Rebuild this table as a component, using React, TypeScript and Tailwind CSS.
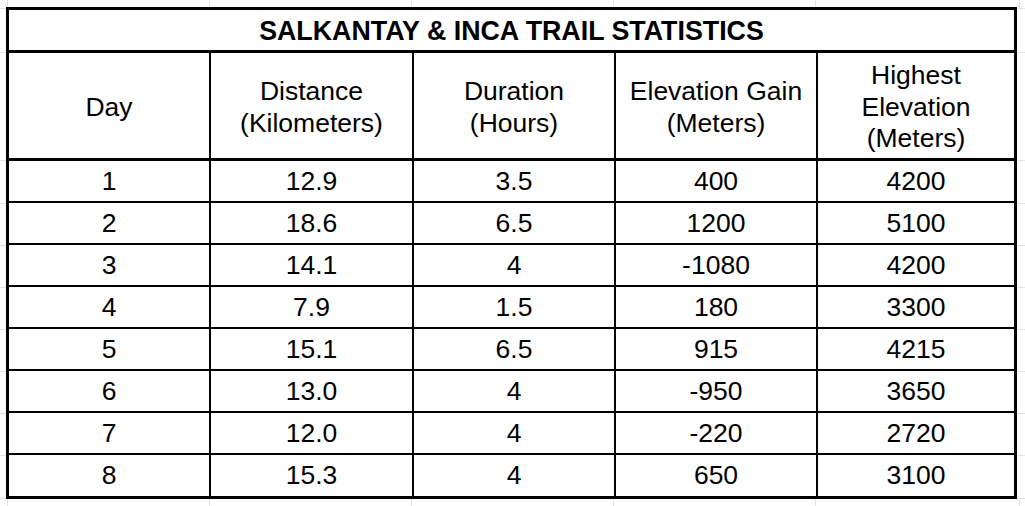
import React from "react";

const rows = [
  ["1", "12.9", "3.5", "400", "4200"],
  ["2", "18.6", "6.5", "1200", "5100"],
  ["3", "14.1", "4", "-1080", "4200"],
  ["4", "7.9", "1.5", "180", "3300"],
  ["5", "15.1", "6.5", "915", "4215"],
  ["6", "13.0", "4", "-950", "3650"],
  ["7", "12.0", "4", "-220", "2720"],
  ["8", "15.3", "4", "650", "3100"],
];

const colW = ["w-[202px] border-r-2", "w-[203px] border-r-2", "w-[202px] border-r-2", "w-[202px] border-r-2", "w-[196px]"];

const headers = [
  ["Day"],
  ["Distance", "(Kilometers)"],
  ["Duration", "(Hours)"],
  ["Elevation Gain", "(Meters)"],
  ["Highest", "Elevation", "(Meters)"],
];

function HStrip() {
  return (
    <div className="flex h-[7px] shrink-0">
      <div className="w-[8px] border-r border-[#e2e2e2]" />
      <div className="w-[202px] border-r border-[#e2e2e2]" />
      <div className="w-[202px] border-r border-[#e2e2e2]" />
      <div className="w-[202px] border-r border-[#e2e2e2]" />
      <div className="w-[202px] border-r border-[#e2e2e2]" />
      <div className="w-[204px] border-r border-[#e2e2e2]" />
      <div className="flex-1" />
    </div>
  );
}

function VStrip({ w }: { w: string }) {
  const seg = "border-b border-[#e2e2e2]";
  return (
    <div className={`flex flex-col ${w}`}>
      <div className={`h-[2px] ${seg}`} />
      <div className={`h-[44px] ${seg}`} />
      <div className={`h-[108px] ${seg}`} />
      <div className={`h-[43px] ${seg}`} />
      <div className={`h-[42px] ${seg}`} />
      <div className={`h-[42px] ${seg}`} />
      <div className={`h-[42px] ${seg}`} />
      <div className={`h-[42px] ${seg}`} />
      <div className={`h-[42px] ${seg}`} />
      <div className={`h-[42px] ${seg}`} />
      <div className={`h-[43px] ${seg}`} />
    </div>
  );
}

export default function App() {
  return (
    <div
      className="flex h-[506px] w-[1025px] flex-col overflow-hidden bg-white text-black"
      style={{ fontFamily: '"Liberation Sans", Arial, sans-serif' }}
    >
      <HStrip />
      <div className="flex">
        <VStrip w="w-[6px]" />
        <div className="w-[1011px] border-[3px] border-black bg-white">
          <div className="flex h-[43px] items-center justify-center border-b-[3px] border-black pt-[2px] text-[26.8px] font-bold">
            SALKANTAY &amp; INCA TRAIL STATISTICS
          </div>
          <div className="flex h-[108px] border-b-[3px] border-black">
            {headers.map((h, i) => (
              <div
                key={i}
                className={`${colW[i]} flex flex-col items-center justify-center border-black pt-[4px] text-center text-[26.5px] leading-[31.5px]`}
              >
                {h.map((l) => (
                  <span key={l}>{l}</span>
                ))}
              </div>
            ))}
          </div>
          {rows.map((r, ri) => (
            <div
              key={ri}
              className={`flex ${ri < rows.length - 1 ? "h-[42px] border-b-2" : "h-[41px]"} border-black`}
            >
              {r.map((c, ci) => (
                <div
                  key={ci}
                  className={`${colW[ci]} flex items-center justify-center border-black pt-[1px] text-[26.5px]`}
                >
                  {c}
                </div>
              ))}
            </div>
          ))}
        </div>
        <VStrip w="flex-1" />
      </div>
      <HStrip />
    </div>
  );
}
